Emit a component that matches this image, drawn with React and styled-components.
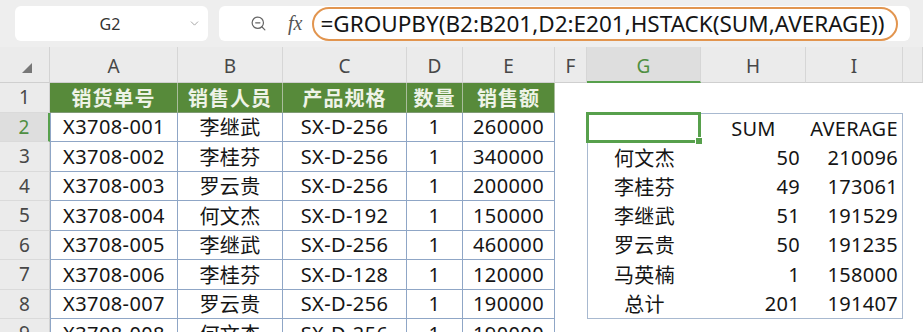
import React from "react";
import styled, { createGlobalStyle, css } from "styled-components";
import { ChevronDown, ZoomOut } from "lucide-react";

const GlobalStyle = createGlobalStyle`
  html, body { margin: 0; padding: 0; background: #ffffff; }
  body { font-family: "Noto Sans", "Noto Sans CJK SC", sans-serif; }
  * { box-sizing: border-box; }
`;

const GREEN = "#57a04c";
const GRID = "#8fa6c6";

const Page = styled.div`
  width: 923px;
  height: 332px;
  overflow: hidden;
  background: #ffffff;
`;

const TopBar = styled.div`
  display: flex;
  align-items: center;
  gap: 11px;
  height: 47px;
  padding: 6px 13px 6px 15px;
  background: #eeeeee;
`;

const NameBox = styled.div`
  width: 193px;
  height: 35px;
  background: #ffffff;
  border-radius: 6px;
  display: flex;
  align-items: center;
  padding: 0 7px 0 17px;
  color: #333;
  font-size: 16px;
`;

const NameText = styled.span`
  flex: 1;
  text-align: center;
`;

const FormulaBox = styled.div`
  flex: 1;
  height: 35px;
  background: #ffffff;
  border-radius: 6px;
  display: flex;
  align-items: center;
  padding-left: 31px;
  color: #666;
`;

const Fx = styled.span`
  font-family: "Liberation Serif", serif;
  font-style: italic;
  font-size: 20px;
  color: #555;
  margin-left: 21px;
  margin-right: 10px;
`;

const Pill = styled.div`
  width: 586px;
  height: 34px;
  border: 2px solid #e2954f;
  border-radius: 17px;
  padding-left: 6px;
  display: flex;
  align-items: center;
  font-size: 22.5px;
  color: #151515;
  white-space: nowrap;
`;

const Sheet = styled.div`
  display: grid;
  grid-template-columns: 50px 128px 105px 124px 56px 92px 32px 114px 105px 97px 1fr;
  grid-template-rows: 36px repeat(9, 29.5px);
`;

const Corner = styled.div`
  background: #ebebeb;
  border-right: 1px solid #d3d3d3;
  border-bottom: 1px solid #cfcfcf;
  display: flex;
  align-items: center;
  padding-left: 22px;
  padding-top: 6px;
`;

const ColHeader = styled.div`
  background: #ebebeb;
  color: #474747;
  font-size: 19px;
  display: flex;
  align-items: center;
  justify-content: center;
  padding-top: 3px;
  border-right: 1px solid #d6d6d6;
  border-bottom: 1px solid #cfcfcf;
  ${(p) =>
    p.$active &&
    css`
      background: #dedede;
      color: #4f8f42;
      border-bottom: 2px solid ${GREEN};
    `}
`;

const RowHeader = styled.div`
  background: #ebebeb;
  color: #474747;
  font-size: 19px;
  display: flex;
  align-items: center;
  justify-content: center;
  border-right: 1px solid #d3d3d3;
  border-bottom: 1px solid #dadada;
  ${(p) =>
    p.$active &&
    css`
      background: #dedede;
      color: #4f8f42;
      border-right: 2px solid ${GREEN};
    `}
`;

const HeadCell = styled.div`
  background: #578a3a;
  color: #eef3e7;
  font-weight: 700;
  font-size: 20px;
  letter-spacing: 1px;
  display: flex;
  align-items: center;
  justify-content: center;
  border-right: 1px solid #a9bd9c;
  border-bottom: 1px solid #7f9a74;
  white-space: nowrap;
`;

const DataCell = styled.div`
  color: #151515;
  font-size: 20px;
  letter-spacing: 0.4px;
  display: flex;
  align-items: center;
  justify-content: center;
  border-right: 1px solid ${GRID};
  border-bottom: 1px solid ${GRID};
  white-space: nowrap;
  ${(p) => p.$first && css`border-left: 1px solid ${GRID};`}
`;

const Empty = styled.div`
  background: #ffffff;
`;

const ResultBox = styled.div`
  grid-column: 8 / 11;
  grid-row: 3 / 10;
  border: 1px solid #a8b9d0;
  display: grid;
  grid-template-columns: 113px 105px 1fr;
  grid-template-rows: repeat(7, 1fr);
`;

const ResultCell = styled.div`
  position: relative;
  color: #151515;
  font-size: 20px;
  letter-spacing: 0.3px;
  display: flex;
  align-items: center;
  white-space: nowrap;
  justify-content: ${(p) => (p.$align === "right" ? "flex-end" : "center")};
  padding-right: ${(p) => (p.$align === "right" ? p.$pad || 6 : 0)}px;
  ${(p) =>
    p.$selected &&
    css`
      border: 3px solid ${GREEN};
      margin: -2px 0 0 -2px;
      &::after {
        content: "";
        position: absolute;
        right: -5px;
        bottom: -5px;
        width: 6px;
        height: 6px;
        background: ${GREEN};
        border: 1px solid #ffffff;
      }
    `}
`;

const cols = ["A", "B", "C", "D", "E", "F", "G", "H", "I", ""];

const headers = ["销货单号", "销售人员", "产品规格", "数量", "销售额"];

const rows = [
  ["X3708-001", "李继武", "SX-D-256", "1", "260000"],
  ["X3708-002", "李桂芬", "SX-D-256", "1", "340000"],
  ["X3708-003", "罗云贵", "SX-D-256", "1", "200000"],
  ["X3708-004", "何文杰", "SX-D-192", "1", "150000"],
  ["X3708-005", "李继武", "SX-D-256", "1", "460000"],
  ["X3708-006", "李桂芬", "SX-D-128", "1", "120000"],
  ["X3708-007", "罗云贵", "SX-D-256", "1", "190000"],
  ["X3708-008", "何文杰", "SX-D-256", "1", "190000"],
];

const result = [
  ["何文杰", "50", "210096"],
  ["李桂芬", "49", "173061"],
  ["李继武", "51", "191529"],
  ["罗云贵", "50", "191235"],
  ["马英楠", "1", "158000"],
  ["总计", "201", "191407"],
];

export default function App() {
  return (
    <Page>
      <GlobalStyle />
      <TopBar>
        <NameBox>
          <NameText>G2</NameText>
          <ChevronDown size={13} color="#9a9a9a" strokeWidth={1.6} />
        </NameBox>
        <FormulaBox>
          <ZoomOut size={17} color="#666" strokeWidth={1.7} />
          <Fx>fx</Fx>
          <Pill>=GROUPBY(B2:B201,D2:E201,HSTACK(SUM,AVERAGE))</Pill>
        </FormulaBox>
      </TopBar>
      <Sheet>
        <Corner>
          <svg width="10" height="10" viewBox="0 0 10 10">
            <polygon points="10,0 10,10 0,10" fill="#777" />
          </svg>
        </Corner>
        {cols.map((c, i) => (
          <ColHeader key={i} $active={c === "G"}>
            {c}
          </ColHeader>
        ))}

        <RowHeader>1</RowHeader>
        {headers.map((h) => (
          <HeadCell key={h}>{h}</HeadCell>
        ))}
        <Empty />
        <Empty />
        <Empty />
        <Empty />
        <Empty />

        {rows.map((r, idx) => {
          const n = idx + 2;
          const inResult = n <= 8;
          return (
            <React.Fragment key={n}>
              <RowHeader $active={n === 2}>{n}</RowHeader>
              {r.map((v, j) => (
                <DataCell key={j} $first={j === 0}>
                  {v}
                </DataCell>
              ))}
              <Empty />
              {!inResult && (
                <>
                  <Empty />
                  <Empty />
                  <Empty />
                </>
              )}
              <Empty />
            </React.Fragment>
          );
        })}

        <ResultBox>
          <ResultCell $selected />
          <ResultCell>SUM</ResultCell>
          <ResultCell>AVERAGE</ResultCell>
          {result.map((r) => (
            <React.Fragment key={r[0]}>
              <ResultCell>{r[0]}</ResultCell>
              <ResultCell $align="right" $pad={6}>
                {r[1]}
              </ResultCell>
              <ResultCell $align="right" $pad={4}>
                {r[2]}
              </ResultCell>
            </React.Fragment>
          ))}
        </ResultBox>
      </Sheet>
    </Page>
  );
}
